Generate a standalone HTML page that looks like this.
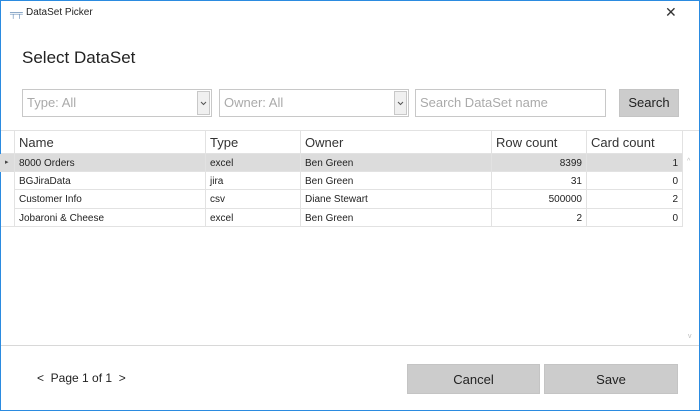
<!DOCTYPE html>
<html><head><style>
*{margin:0;padding:0;box-sizing:border-box}
body{width:700px;height:411px;background:#fff;font-family:"Liberation Sans",sans-serif;position:relative;overflow:hidden}
.a{position:absolute}
.win{left:0;top:0;width:700px;height:411px;border:1px solid #2b8be0}
.cell{position:absolute;font-size:10px;color:#222;white-space:nowrap;overflow:hidden;padding:1px 4px 0;line-height:18px;border-right:1px solid #e2e2e2;border-bottom:1px solid #e2e2e2}
.hd{font-size:13px;color:#333;line-height:23px;padding-top:0}
.r{text-align:right}
.btn{position:absolute;background:#cccccc;border:1px solid #c4c4c4;font-size:13px;color:#222;text-align:center}
.combo{position:absolute;border:1px solid #c8c8c8;background:#fff;font-size:13px;color:#aaa;padding-left:4px;line-height:26px}
.dd{position:absolute;right:1px;top:1px;width:13px;height:24px;border:1px solid #c8c8c8;background:#f0f0f0}
</style></head><body>
<div class="a win"></div>
<div class="a" style="left:10px;top:8px;font-size:9px;color:#6a8fb8">╤╤</div>
<div class="a" style="left:26px;top:7px;font-size:10px;color:#222">DataSet Picker</div>
<div class="a" style="left:665px;top:4px;font-size:14px;color:#333">✕</div>
<div class="a" style="left:22px;top:48px;font-size:17px;color:#222">Select DataSet</div>
<div class="combo" style="left:22px;top:89px;width:190px;height:28px">Type: All<div class="dd"><svg width="11" height="22"><path d="M3 10l2.5 2.5L8 10" fill="none" stroke="#555" stroke-width="1"/></svg></div></div>
<div class="combo" style="left:219px;top:89px;width:190px;height:28px">Owner: All<div class="dd"><svg width="11" height="22"><path d="M3 10l2.5 2.5L8 10" fill="none" stroke="#555" stroke-width="1"/></svg></div></div>
<div class="combo" style="left:415px;top:89px;width:191px;height:28px">Search DataSet name</div>
<div class="btn" style="left:619px;top:89px;width:60px;height:28px;line-height:26px">Search</div>

<div class="a" style="left:1px;top:130px;width:698px;height:216px;border-top:1px solid #e2e2e2;border-bottom:1px solid #d8d8d8"></div>
<div class="a" style="left:683px;top:154px;width:16px;height:191px;background:#fff"></div>
<div class="a" style="left:687px;top:158px;font-size:7px;color:#bbb">^</div>
<div class="a" style="left:688px;top:333px;font-size:7px;color:#bbb">v</div>
<div class="a" style="left:0;top:154px;width:683px;height:18px;background:#dcdcdc"></div>
<div class="a" style="left:5px;top:158px;font-size:7px;color:#444">▸</div>

<div class="cell hd" style="left:1px;top:131px;width:14px;height:23px;"></div>
<div class="cell hd" style="left:15px;top:131px;width:191px;height:23px">Name</div>
<div class="cell hd" style="left:206px;top:131px;width:95px;height:23px">Type</div>
<div class="cell hd" style="left:301px;top:131px;width:191px;height:23px">Owner</div>
<div class="cell hd" style="left:492px;top:131px;width:95px;height:23px">Row count</div>
<div class="cell hd" style="left:587px;top:131px;width:96px;height:23px">Card count</div>

<div class="cell" style="left:1px;top:154px;width:14px;height:73px"></div>

<div class="cell" style="left:15px;top:154px;width:191px;height:18px">8000 Orders</div>
<div class="cell" style="left:206px;top:154px;width:95px;height:18px">excel</div>
<div class="cell" style="left:301px;top:154px;width:191px;height:18px">Ben Green</div>
<div class="cell r" style="left:492px;top:154px;width:95px;height:18px">8399</div>
<div class="cell r" style="left:587px;top:154px;width:96px;height:18px">1</div>

<div class="cell" style="left:15px;top:172px;width:191px;height:18px">BGJiraData</div>
<div class="cell" style="left:206px;top:172px;width:95px;height:18px">jira</div>
<div class="cell" style="left:301px;top:172px;width:191px;height:18px">Ben Green</div>
<div class="cell r" style="left:492px;top:172px;width:95px;height:18px">31</div>
<div class="cell r" style="left:587px;top:172px;width:96px;height:18px">0</div>

<div class="cell" style="left:15px;top:190px;width:191px;height:19px">Customer Info</div>
<div class="cell" style="left:206px;top:190px;width:95px;height:19px">csv</div>
<div class="cell" style="left:301px;top:190px;width:191px;height:19px">Diane Stewart</div>
<div class="cell r" style="left:492px;top:190px;width:95px;height:19px">500000</div>
<div class="cell r" style="left:587px;top:190px;width:96px;height:19px">2</div>

<div class="cell" style="left:15px;top:209px;width:191px;height:18px">Jobaroni &amp; Cheese</div>
<div class="cell" style="left:206px;top:209px;width:95px;height:18px">excel</div>
<div class="cell" style="left:301px;top:209px;width:191px;height:18px">Ben Green</div>
<div class="cell r" style="left:492px;top:209px;width:95px;height:18px">2</div>
<div class="cell r" style="left:587px;top:209px;width:96px;height:18px">0</div>

<div class="a" style="left:37px;top:371px;font-size:12px;color:#222">&lt;&nbsp; Page 1 of 1 &nbsp;&gt;</div>
<div class="btn" style="left:407px;top:364px;width:133px;height:30px;line-height:30px">Cancel</div>
<div class="btn" style="left:544px;top:364px;width:134px;height:30px;line-height:30px">Save</div>
</body></html>
